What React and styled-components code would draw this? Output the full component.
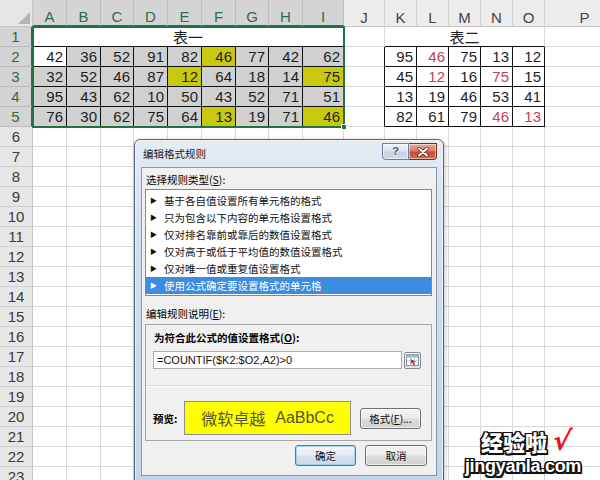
import React from 'react';
import styled, { createGlobalStyle } from 'styled-components';

const GREEN = '#217346';
const GRID = '#d9d9d9';
const CJK = '"Noto Sans CJK SC", "Noto Sans", sans-serif';

const GlobalStyle = createGlobalStyle`
  *, *::before, *::after { box-sizing: border-box; }
  html, body { margin: 0; padding: 0; width: 600px; height: 480px; overflow: hidden; background: #fff; }
  body { font-family: "Liberation Sans", "Noto Sans CJK SC", sans-serif; }
`;

const Page = styled.div`
  position: relative;
  width: 600px;
  height: 480px;
  overflow: hidden;
`;

const Sheet = styled.div`
  display: grid;
  grid-template-columns: 33px 34px 34px 33px 34px 34px 34px 33px 34px 41px 41px 32px 32px 32px 32px 32px 80px;
  grid-template-rows: 27px repeat(23, 20px);
  width: 625px;
`;

const Corner = styled.div`
  grid-row: 1;
  grid-column: 1;
  background: #e6e6e6;
  border-right: 1px solid #c6c6c6;
  border-bottom: 1px solid #c6c6c6;
  display: flex;
  align-items: flex-end;
  justify-content: flex-end;
  padding: 0 2px 2px 0;
  &::after {
    content: '';
    width: 0;
    height: 0;
    border-style: solid;
    border-width: 0 0 12px 12px;
    border-color: transparent transparent #b5b5b5 transparent;
  }
`;

const ColHead = styled.div`
  grid-row: 1;
  grid-column: ${(p) => p.$c};
  background: ${(p) => (p.$sel ? '#d4d4d4' : '#ececec')};
  border-right: 1px solid ${(p) => (p.$sel ? '#bdbdbd' : '#d3d3d3')};
  border-bottom: ${(p) => (p.$sel ? `2px solid ${GREEN}` : '1px solid #c6c6c6')};
  color: ${(p) => (p.$sel ? '#33684a' : '#444')};
  font: 15px/15px "Liberation Sans", sans-serif;
  display: flex;
  align-items: flex-end;
  justify-content: center;
  padding-bottom: 1px;
`;

const RowHead = styled.div`
  grid-row: ${(p) => p.$r};
  grid-column: 1;
  background: ${(p) => (p.$sel ? '#d4d4d4' : '#e6e6e6')};
  border-right: ${(p) => (p.$sel ? `2px solid ${GREEN}` : '1px solid #c6c6c6')};
  border-bottom: 1px solid ${(p) => (p.$sel ? '#bdbdbd' : '#d0d0d0')};
  color: ${(p) => (p.$sel ? '#33684a' : '#3a3a3a')};
  font: 15px/1 "Liberation Sans", sans-serif;
  display: flex;
  align-items: center;
  justify-content: center;
`;

const Cell = styled.div`
  grid-row: ${(p) => p.$r};
  grid-column: ${(p) => p.$c} / span ${(p) => p.$span || 1};
  background: ${(p) => p.$fill || '#fff'};
  border-right: 1px solid ${(p) => p.$rb || GRID};
  border-bottom: 1px solid ${(p) => p.$bb || GRID};
  color: ${(p) => (p.$red ? '#c4404e' : '#1e1e1e')};
  font: 15px/1 "Liberation Sans", sans-serif;
  display: flex;
  align-items: center;
  justify-content: flex-end;
  padding-right: 3px;
`;

const TitleCell = styled(Cell)`
  justify-content: center;
  padding-right: 0;
  font: 15px/1 ${CJK};
  color: #1e1e1e;
`;

const Selection = styled.div`
  grid-row: 2 / 7;
  grid-column: 2 / 11;
  margin: -1px -1px -1px -1px;
  border: 2px solid ${GREEN};
  position: relative;
  pointer-events: none;
  &::after {
    content: '';
    position: absolute;
    right: -4px;
    bottom: -4px;
    width: 6px;
    height: 6px;
    background: ${GREEN};
    border: 1px solid #fff;
  }
`;

/* ---------- Dialog ---------- */

const Dialog = styled.div`
  position: absolute;
  left: 134px;
  top: 139px;
  width: 310px;
  height: 346px;
  border: 1px solid #56677a;
  border-radius: 6px 6px 0 0;
  background: linear-gradient(180deg, #e4ebf3 0%, #d3dfec 30%, #c3d5e9 100%);
  box-shadow: inset 0 0 0 1px rgba(255, 255, 255, 0.55), 1px 1px 4px rgba(0, 0, 0, 0.25);
  padding: 0 6px;
  display: flex;
  flex-direction: column;
  font-family: ${CJK};
  font-size: 10.5px;
  color: #000;
`;

const TitleBar = styled.div`
  height: 27px;
  flex: none;
  display: flex;
  align-items: flex-start;
  justify-content: space-between;
`;

const TitleText = styled.div`
  padding: 6px 0 0 2px;
  line-height: 15px;
  font-size: 10.5px;
  color: #1a1a1a;
`;

const CaptionButtons = styled.div`
  display: flex;
  margin-top: 3px;
`;

const CapBtn = styled.div`
  width: ${(p) => (p.$close ? 28 : 27)}px;
  height: 17px;
  display: flex;
  align-items: center;
  justify-content: center;
  border: 1px solid ${(p) => (p.$close ? '#7a2a1e' : '#6b7f96')};
  border-left-width: ${(p) => (p.$close ? 0 : 1)}px;
  border-radius: ${(p) => (p.$close ? '0 0 4px 0' : '0 0 0 4px')};
  background: ${(p) =>
    p.$close
      ? 'linear-gradient(180deg, #e9a99c 0%, #d97a66 48%, #c64a33 52%, #d36a4e 100%)'
      : 'linear-gradient(180deg, #eef3f8 0%, #d8e2ee 48%, #c3d2e3 52%, #cfdbe8 100%)'};
  box-shadow: inset 0 0 0 1px rgba(255, 255, 255, 0.5);
  font: bold 11px/1 "Liberation Sans", sans-serif;
  color: #4a5a6e;
  text-shadow: 0 1px 0 #fff;
`;

const Client = styled.div`
  flex: 1;
  background: #f0f0f0;
  border: 1px solid #8797aa;
  padding: 5px 4px 0 3px;
  display: flex;
  flex-direction: column;
  margin-bottom: 8px;
`;

const Label = styled.div`
  line-height: 14px;
  height: 14px;
  padding-left: 1px;
  margin-top: ${(p) => p.$mt || 0}px;
  font-weight: ${(p) => (p.$bold ? 700 : 400)};
  white-space: nowrap;
  u { text-decoration: underline; }
`;

const ListBox = styled.div`
  margin-top: 2px;
  border: 1px solid #828790;
  background: #fff;
  padding: 2px 0 1px;
  display: flex;
  flex-direction: column;
`;

const ListItem = styled.div`
  height: 17px;
  display: flex;
  align-items: center;
  padding-left: 4px;
  gap: 7px;
  background: ${(p) => (p.$sel ? '#3c8de0' : 'transparent')};
  color: ${(p) => (p.$sel ? '#fff' : '#111')};
  white-space: nowrap;
`;

const Bullet = styled.span`
  font-size: 7px;
  width: 7px;
  line-height: 1;
`;

const DescBox = styled.div`
  margin-top: 3px;
  border: 1px solid #a5a5a5;
  background: #f0f0f0;
  display: flex;
  flex-direction: column;
`;

const DescTop = styled.div`
  padding: 6px 10px 16px 7px;
  display: flex;
  flex-direction: column;
`;

const InputRow = styled.div`
  margin-top: 6px;
  display: flex;
  align-items: center;
  gap: 2px;
`;

const FormulaInput = styled.div`
  width: 250px;
  height: 18px;
  border: 1px solid #abadb3;
  background: #fff;
  font: 11px/16px "Liberation Sans", sans-serif;
  padding-left: 3px;
  color: #111;
`;

const RangeBtn = styled.div`
  width: 17px;
  height: 17px;
  border: 1px solid #8a8a8a;
  border-radius: 2px;
  background: linear-gradient(180deg, #fafafa, #e2e2e2);
  display: flex;
  align-items: center;
  justify-content: center;
`;

const Separator = styled.div`
  height: 2px;
  border-top: 1px solid #d8d8d8;
  border-bottom: 1px solid #fbfbfb;
`;

const DescBottom = styled.div`
  padding: 14px 10px 5px 7px;
  display: flex;
  align-items: center;
`;

const PreviewLabel = styled.div`
  width: 31px;
  font-weight: 700;
`;

const PreviewBox = styled.div`
  width: 168px;
  height: 34px;
  background: #ffff00;
  border: 1px solid #8e8e8e;
  display: flex;
  align-items: center;
  justify-content: center;
  font: 16px/1 ${CJK};
  color: #55552e;
  gap: 10px;
`;

const Latin = styled.span`
  font-family: "Liberation Sans", sans-serif;
`;

const Btn = styled.div`
  width: ${(p) => p.$w || 61}px;
  height: 21px;
  margin-left: ${(p) => p.$ml || 0}px;
  border: 1px solid ${(p) => (p.$primary ? '#3c7fb1' : '#707070')};
  border-radius: 3px;
  background: ${(p) =>
    p.$primary
      ? 'linear-gradient(180deg, #f3f7fb 0%, #e4ecf4 49%, #d6e2ee 51%, #cbd9e7 100%)'
      : 'linear-gradient(180deg, #f4f4f4 0%, #ebebeb 49%, #dddddd 51%, #d0d0d0 100%)'};
  box-shadow: inset 0 0 0 1px ${(p) => (p.$primary ? 'rgba(120,200,245,0.6)' : 'rgba(255,255,255,0.6)')};
  display: flex;
  align-items: center;
  justify-content: center;
  font-size: 10.5px;
  color: #111;
  u { text-decoration: underline; }
`;

const ButtonRow = styled.div`
  margin-top: 4px;
  padding-right: 5px;
  display: flex;
  justify-content: flex-end;
  gap: 9px;
`;

/* ---------- Watermark ---------- */

const outline =
  '-1.5px -1.5px 0 #111, 1.5px -1.5px 0 #111, -1.5px 1.5px 0 #111, 1.5px 1.5px 0 #111, 0 1.5px 0 #111, 0 -1.5px 0 #111, 1.5px 0 0 #111, -1.5px 0 0 #111, 2px 2px 1px #777';

const Watermark = styled.div`
  position: absolute;
  left: 460px;
  top: 426px;
  width: 126px;
  display: flex;
  flex-direction: column;
  align-items: center;
  pointer-events: none;
`;

const WmTop = styled.div`
  display: flex;
  align-items: center;
  gap: 6px;
  height: 29px;
  padding-left: 6px;
`;

const WmBrand = styled.span`
  font: 900 22px/1 ${CJK};
  color: #fff;
  text-shadow: ${outline};
  letter-spacing: 0px;
`;

const WmCheck = styled.span`
  font: bold 27px/1 "DejaVu Sans", sans-serif;
  color: #f01010;
  transform: skewX(-8deg);
`;

const WmUrl = styled.div`
  font: 900 18px/22px "Liberation Sans", sans-serif;
  color: #fff;
  text-shadow: ${outline};
  letter-spacing: -0.3px;
`;

/* ---------- Data ---------- */

const letters = 'ABCDEFGHIJKLMNOP'.split('');
const t1 = [
  [42, 36, 52, 91, 82, 46, 77, 42, 62],
  [32, 52, 46, 87, 12, 64, 18, 14, 75],
  [95, 43, 62, 10, 50, 43, 52, 71, 51],
  [76, 30, 62, 75, 64, 13, 19, 71, 46],
];
const yellow = new Set(['0,5', '1,4', '1,8', '3,5', '3,8']);
const t2 = [
  [95, 46, 75, 13, 12],
  [45, 12, 16, 75, 15],
  [13, 19, 46, 53, 41],
  [82, 61, 79, 46, 13],
];
const red = new Set(['0,1', '1,1', '1,3', '3,3', '3,4']);

const rules = [
  '基于各自值设置所有单元格的格式',
  '只为包含以下内容的单元格设置格式',
  '仅对排名靠前或靠后的数值设置格式',
  '仅对高于或低于平均值的数值设置格式',
  '仅对唯一值或重复值设置格式',
  '使用公式确定要设置格式的单元格',
];

function SheetGrid() {
  const cells = [];
  cells.push(<Corner key="corner" />);
  letters.forEach((l, i) => {
    cells.push(
      <ColHead key={'h' + l} $c={i + 2} $sel={i < 9}>
        {l}
      </ColHead>
    );
  });
  for (let n = 1; n <= 23; n++) {
    const r = n + 1;
    cells.push(
      <RowHead key={'r' + n} $r={r} $sel={n <= 5}>
        {n}
      </RowHead>
    );
    if (n === 1) {
      cells.push(
        <TitleCell key="t1" $r={r} $c={2} $span={9} $bb="#111">
          表一
        </TitleCell>
      );
      cells.push(<Cell key="j1" $r={r} $c={11} />);
      cells.push(
        <TitleCell key="t2" $r={r} $c={12} $span={5} $bb="#111">
          表二
        </TitleCell>
      );
      cells.push(<Cell key="p1" $r={r} $c={17} />);
    } else if (n <= 5) {
      const i = n - 2;
      t1[i].forEach((v, j) => {
        const fill =
          i === 0 && j === 0 ? '#fff' : yellow.has(`${i},${j}`) ? '#c8c80f' : '#d0d0d0';
        cells.push(
          <Cell key={`a${n}-${j}`} $r={r} $c={j + 2} $fill={fill} $rb="#111" $bb="#111">
            {v}
          </Cell>
        );
      });
      cells.push(<Cell key={'j' + n} $r={r} $c={11} $rb="#111" />);
      t2[i].forEach((v, j) => {
        cells.push(
          <Cell key={`k${n}-${j}`} $r={r} $c={j + 12} $rb="#111" $bb="#111" $red={red.has(`${i},${j}`)}>
            {v}
          </Cell>
        );
      });
      cells.push(<Cell key={'p' + n} $r={r} $c={17} />);
    } else {
      for (let c = 2; c <= 17; c++) {
        cells.push(<Cell key={`e${n}-${c}`} $r={r} $c={c} />);
      }
    }
  }
  cells.push(<Selection key="sel" />);
  return <Sheet>{cells}</Sheet>;
}

function CloseGlyph() {
  return (
    <svg width="12" height="10" viewBox="0 0 12 10">
      <path d="M2 1.5 L10 8.5 M10 1.5 L2 8.5" stroke="#5a1a10" strokeWidth="3.4" strokeLinecap="round" />
      <path d="M2 1.5 L10 8.5 M10 1.5 L2 8.5" stroke="#fff" strokeWidth="2" strokeLinecap="round" />
    </svg>
  );
}

function RangeGlyph() {
  return (
    <svg width="13" height="12" viewBox="0 0 13 12">
      <rect x="0.5" y="0.5" width="12" height="11" fill="#fff" stroke="#7d8fa3" />
      <rect x="0.5" y="0.5" width="12" height="3" fill="#9fb6d0" />
      <path d="M0.5 7 H12.5 M4.5 3.5 V11.5 M8.5 3.5 V11.5" stroke="#b9c4d0" strokeWidth="1" />
      <path d="M5 5 L10 8 L7.5 8.3 L9 11 L7.6 11.5 L6.3 8.8 L5 10 Z" fill="#d42a2a" />
    </svg>
  );
}

function FormatDialog() {
  return (
    <Dialog>
      <TitleBar>
        <TitleText>编辑格式规则</TitleText>
        <CaptionButtons>
          <CapBtn>?</CapBtn>
          <CapBtn $close>
            <CloseGlyph />
          </CapBtn>
        </CaptionButtons>
      </TitleBar>
      <Client>
        <Label>
          选择规则类型(<u>S</u>):
        </Label>
        <ListBox>
          {rules.map((t, i) => (
            <ListItem key={t} $sel={i === rules.length - 1}>
              <Bullet>▶</Bullet>
              {t}
            </ListItem>
          ))}
        </ListBox>
        <Label $mt={11}>
          编辑规则说明(<u>E</u>):
        </Label>
        <DescBox>
          <DescTop>
            <Label $bold>
              为符合此公式的值设置格式(<u>O</u>):
            </Label>
            <InputRow>
              <FormulaInput>=COUNTIF($K2:$O2,A2)&gt;0</FormulaInput>
              <RangeBtn>
                <RangeGlyph />
              </RangeBtn>
            </InputRow>
          </DescTop>
          <Separator />
          <DescBottom>
            <PreviewLabel>预览:</PreviewLabel>
            <PreviewBox>
              <span>微软卓越</span>
              <Latin>AaBbCc</Latin>
            </PreviewBox>
            <Btn $ml={9} $w={61}>
              格式(<u>F</u>)...
            </Btn>
          </DescBottom>
        </DescBox>
        <ButtonRow>
          <Btn $primary $w={61}>确定</Btn>
          <Btn $w={62}>取消</Btn>
        </ButtonRow>
      </Client>
    </Dialog>
  );
}

export default function App() {
  return (
    <Page>
      <GlobalStyle />
      <SheetGrid />
      <FormatDialog />
      <Watermark>
        <WmTop>
          <WmBrand>经验啦</WmBrand>
          <WmCheck>√</WmCheck>
        </WmTop>
        <WmUrl>jingyanla.com</WmUrl>
      </Watermark>
    </Page>
  );
}
